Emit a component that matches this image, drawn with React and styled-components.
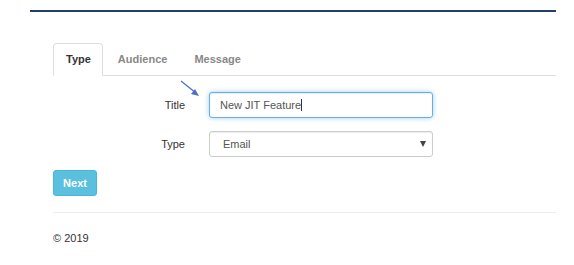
import React from 'react';
import styled, { createGlobalStyle } from 'styled-components';

const GlobalStyle = createGlobalStyle`
  body {
    margin: 0;
    background: #fff;
    font-family: "Liberation Sans", Arial, sans-serif;
    color: #333;
  }
`;

const tabs = ['Type', 'Audience', 'Message'];

const App = () => {
  return (
    <Page>
      <GlobalStyle />
      <TopRule />
      <Content>
        <TabBar>
          {tabs.map((t, i) => (
            <Tab key={t} active={i === 0}>{t}</Tab>
          ))}
        </TabBar>

        <FormArea>
          <Pointer width="22" height="18" viewBox="0 0 22 18">
            <line x1="1" y1="1" x2="16" y2="13" stroke="#4a72c4" strokeWidth="1.3" />
            <polygon points="19,16 11,14 15,9" fill="#4a72c4" />
          </Pointer>
          <FormGrid>
            <Label>Title</Label>
            <InputWrap>
              <TextInput focused defaultValue="New JIT Feature" />
            </InputWrap>
            <Label>Type</Label>
            <SelectBox>
              <span>Email</span>
              <Caret />
            </SelectBox>
          </FormGrid>
        </FormArea>

        <NextButton>Next</NextButton>
        <Divider />
        <Footer>© 2019</Footer>
      </Content>
    </Page>
  );
};

export default App;

const Page = styled.div`
  padding: 10px 18px 0 30px;
`;

const TopRule = styled.div`
  height: 2px;
  background: #213f6e;
`;

const Content = styled.div`
  margin-left: 23px;
  padding-top: 31px;
`;

const TabBar = styled.div`
  display: flex;
  gap: 2px;
  border-bottom: 1px solid #ddd;
  height: 32px;
`;

const Tab = styled.div`
  box-sizing: border-box;
  height: 33px;
  padding: 0 11px 1px 12px;
  display: flex;
  align-items: center;
  font-size: 11px;
  font-weight: bold;
  color: ${p => (p.active ? '#333' : '#888')};
  border: 1px solid ${p => (p.active ? '#ddd' : 'transparent')};
  border-bottom-color: ${p => (p.active ? '#fff' : 'transparent')};
  background: ${p => (p.active ? '#fff' : 'transparent')};
  border-radius: 4px 4px 0 0;
`;

const FormArea = styled.div`
  position: relative;
  padding-top: 16px;
`;

const Pointer = styled.svg`
  position: absolute;
  left: 127px;
  top: 4px;
`;

const FormGrid = styled.div`
  display: grid;
  grid-template-columns: 132px 224px;
  column-gap: 24px;
  row-gap: 13px;
  align-items: center;
`;

const Label = styled.div`
  text-align: right;
  font-size: 11px;
  color: #333;
`;

const InputWrap = styled.div`
  position: relative;
  height: 26px;
  &::after {
    content: '';
    position: absolute;
    left: 92px;
    top: 7px;
    width: 1px;
    height: 12px;
    background: #333;
  }
`;

const TextInput = styled.input`
  box-sizing: border-box;
  height: 26px;
  width: 224px;
  padding: 0 10px;
  font-family: "Liberation Sans", Arial, sans-serif;
  font-size: 11px;
  color: #555;
  border-radius: 3px;
  outline: none;
  border: 1px solid ${p => (p.focused ? '#66afe9' : '#ccc')};
  box-shadow: ${p => (p.focused ? 'inset 0 1px 1px rgba(0,0,0,.075), 0 0 5px rgba(102,175,233,.6)' : 'inset 0 1px 1px rgba(0,0,0,.075)')};
`;

const SelectBox = styled.div`
  box-sizing: border-box;
  height: 26px;
  width: 224px;
  padding: 0 6px 0 13px;
  display: flex;
  align-items: center;
  justify-content: space-between;
  font-size: 11px;
  color: #555;
  border: 1px solid #ccc;
  border-radius: 3px;
  box-shadow: inset 0 1px 1px rgba(0,0,0,.075);
`;

const Caret = styled.span`
  width: 0;
  height: 0;
  border-left: 3.5px solid transparent;
  border-right: 3.5px solid transparent;
  border-top: 6px solid #444;
`;

const NextButton = styled.button`
  display: block;
  margin-top: 13px;
  box-sizing: border-box;
  width: 44px;
  height: 26px;
  padding: 0;
  font-family: "Liberation Sans", Arial, sans-serif;
  font-size: 11px;
  font-weight: bold;
  color: #fff;
  background: #5bc0de;
  border: 1px solid #46b8da;
  border-radius: 3px;
  cursor: pointer;
`;

const Divider = styled.hr`
  margin: 16px 0 0;
  border: 0;
  border-top: 1px solid #eee;
`;

const Footer = styled.div`
  font-size: 11px;
  color: #333;
  padding-top: 19px;
`;
